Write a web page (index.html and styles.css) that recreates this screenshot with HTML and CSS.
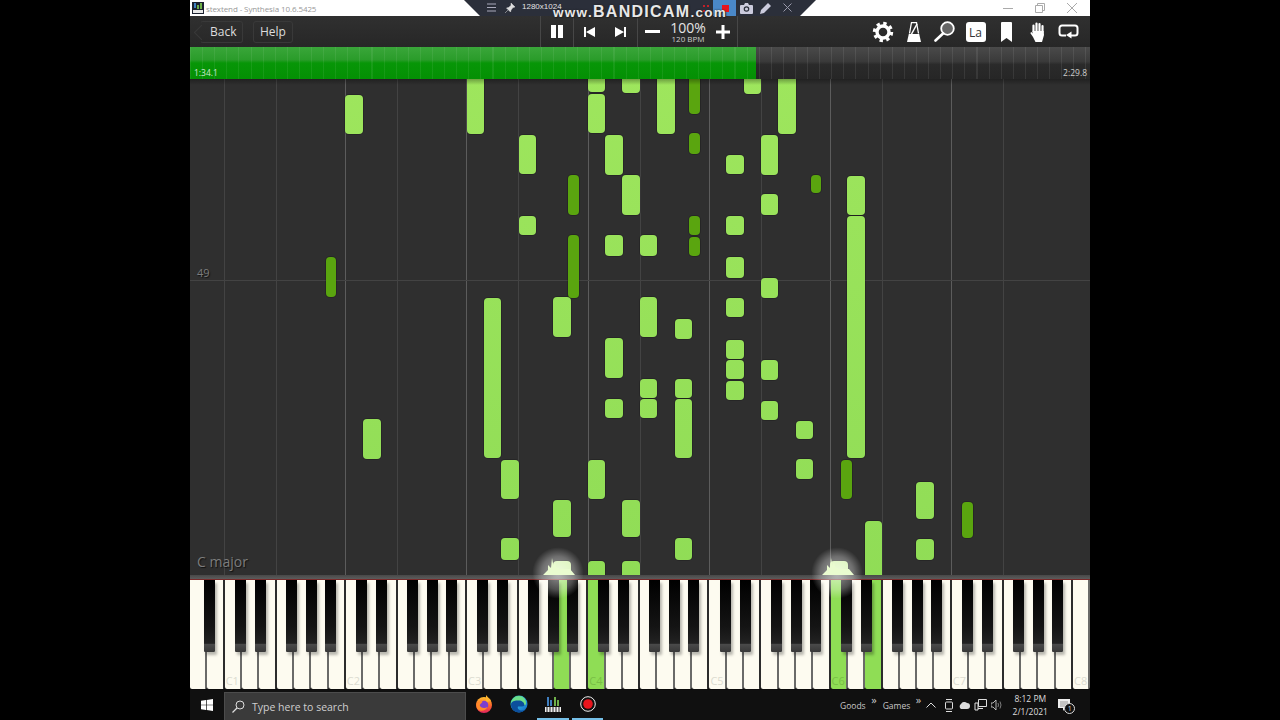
FILE: index.html
```html
<!DOCTYPE html>
<html lang="en">
<head>
    <meta charset="UTF-8">
    <title>stextend - Synthesia</title>
    <link rel="stylesheet" href="styles.css">
</head>
<body>
    <div class="screen">
        <div class="titlebar">
            <svg class="app-icon" width="12" height="12" viewBox="0 0 12 12">
                <rect width="12" height="12" fill="#1c2230"/>
                <rect x="2" y="1" width="2" height="5" fill="#3f7fc0"/>
                <rect x="5" y="3" width="2" height="4" fill="#6fb04a"/>
                <rect x="8" y="1" width="2" height="6" fill="#6fb04a"/>
                <rect x="1" y="8" width="10" height="3" fill="#e8e8e8"/>
            </svg>
            <span class="title-text">stextend - Synthesia 10.6.5425</span>
            <div class="window-buttons">
                <svg width="10" height="10" viewBox="0 0 10 10"><path d="M0 5.5h10" stroke="#aaa"/></svg>
                <svg width="10" height="10" viewBox="0 0 10 10"><path d="M.5 2.5h7v7h-7zM2.5 2.5v-2h7v7h-2" fill="none" stroke="#aaa"/></svg>
                <svg width="10" height="10" viewBox="0 0 10 10"><path d="M0 0l10 10M10 0L0 10" stroke="#aaa"/></svg>
            </div>
        </div>

        <div class="bandicam">
            <svg class="bc-icon" style="left:23px" width="10" height="9" viewBox="0 0 10 9"><path d="M0 1h9M0 4.5h9M0 8h9" stroke="#aab"/></svg>
            <svg class="bc-icon" style="left:41px" width="10" height="10" viewBox="0 0 10 10"><path d="M6 0l4 4-2 .5-2 2.5-.5 2L1.500 5l2-.5L6 2.500zM3 7L0 10" fill="#ddd" stroke="#ddd" stroke-width=".5"/></svg>
            <span class="bc-size">1280x1024</span>
            <div class="bc-rec"><span class="bc-square"></span></div>
            <span class="bc-dots"></span>
            <svg class="bc-icon" style="left:276px" width="13" height="11" viewBox="0 0 13 11"><path d="M1 2h3l1-2h3l1 2h3a1 1 0 0 1 1 1v7a1 1 0 0 1-1 1H1a1 1 0 0 1-1-1V3a1 1 0 0 1 1-1z" fill="#ccd"/><circle cx="6.500" cy="6" r="2.800" fill="#2b2f3a"/><circle cx="6.500" cy="6" r="1.600" fill="#ccd"/></svg>
            <svg class="bc-icon" style="left:296px" width="11" height="11" viewBox="0 0 11 11"><path d="M8 0l3 3-7 7-4 1 1-4z" fill="#ccd"/></svg>
            <svg class="bc-icon" style="left:319px" width="9" height="9" viewBox="0 0 9 9"><path d="M.5.5l8 8M8.500.5l-8 8" stroke="#99a"/></svg>
        </div>
        <span class="watermark"><small>www.</small>BANDICAM<small>.com</small></span>

        <div class="toolbar">
            <div class="nav-group">
                <a class="tool-btn back-btn">Back</a>
                <a class="tool-btn">Help</a>
            </div>
            <div class="tool-seg pause-seg">
                <svg width="12" height="13" viewBox="0 0 12 13"><path d="M0 0h5v13H0zM7 0h5v13H7z" fill="#fff"/></svg>
            </div>
            <div class="tool-seg skip-seg">
                <svg width="11" height="10" viewBox="0 0 11 10"><path d="M0 0h2v10H0zM11 0v10L2 5z" fill="#fff"/></svg>
                <svg width="11" height="10" viewBox="0 0 11 10"><path d="M11 0H9v10h2zM0 0v10l9-5z" fill="#fff"/></svg>
            </div>
            <div class="tool-seg speed-seg">
                <svg width="15" height="3" viewBox="0 0 15 3"><path d="M0 0h15v3H0z" fill="#fff"/></svg>
                <div class="speed">
                    <span class="speed-pct">100%</span>
                    <span class="speed-bpm">120 BPM</span>
                </div>
                <svg width="14" height="14" viewBox="0 0 14 14"><path d="M5.500 0h3v5.500H14v3H8.500V14h-3V8.500H0v-3h5.500z" fill="#fff"/></svg>
            </div>
            <div class="tool-icons">
                <svg width="22" height="22" viewBox="0 0 22 22">
                    <circle cx="11" cy="11" r="8.500" fill="none" stroke="#fff" stroke-width="3.400" stroke-dasharray="3.300 3.370"/>
                    <circle cx="11" cy="11" r="6" fill="none" stroke="#fff" stroke-width="3.400"/>
                </svg>
                <svg width="14" height="20" viewBox="0 0 14 20">
                    <path d="M0 20L1.800 12h10.400L14 20z" fill="#fff"/>
                    <path d="M2.500 11.500L4.500.5h5l2 11" fill="none" stroke="#fff" stroke-width="1.300"/>
                    <path d="M4 13L10 2" stroke="#fff" stroke-width="1.500"/>
                </svg>
                <svg width="21" height="21" viewBox="0 0 21 21">
                    <circle cx="13.500" cy="7.500" r="6.300" fill="#666" stroke="#fff" stroke-width="1.800"/>
                    <path d="M9 12.500L1.500 19.500" stroke="#fff" stroke-width="2.600" stroke-linecap="round"/>
                </svg>
                <span class="lang-btn">La</span>
                <svg width="11" height="20" viewBox="0 0 11 20"><path d="M1 0h9a1 1 0 0 1 1 1v19l-5.500-4L0 20V1a1 1 0 0 1 1-1z" fill="#fff"/></svg>
                <svg width="16" height="20" viewBox="0 0 16 20">
                    <path d="M3.500 10V3.500M6.500 9V1.500M9.500 9V2M12.500 10V4" stroke="#fff" stroke-width="2.200" stroke-linecap="round"/>
                    <path d="M2.500 9h11.200L14 13l-2 7H5.500L3 15 .3 11l1-1 1.700 1.500z" fill="#fff"/>
                </svg>
                <svg width="21" height="15" viewBox="0 0 21 15">
                    <path d="M8 11.500H4A2.500 2.500 0 0 1 1.500 9V4A2.500 2.500 0 0 1 4 1.500h13A2.500 2.500 0 0 1 19.500 4v5a2.500 2.500 0 0 1-2.500 2.500h-4" fill="none" stroke="#fff" stroke-width="2"/>
                    <path d="M13.500 7.500v7L8 11z" fill="#fff"/>
                </svg>
            </div>
        </div>

        <div class="progress">
            <div class="progress-done"></div>
            <span class="time time-now">1:34.1</span>
            <span class="time time-end">2:29.8</span>
        </div>

        <div class="stage" id="stage">
            <div class="roll" id="roll">
                <span class="measure">49</span>
                <span class="key-sig">C major</span>
            </div>
            <div class="divider"></div>
            <div class="keyboard" id="keyboard"></div>
        </div>

        <div class="taskbar">
            <svg class="start" width="12" height="12" viewBox="0 0 12 12"><path d="M0 1.700L5 1v4.700H0zM5.700.9L12 0v5.700H5.700zM0 6.300h5V11l-5-.7zM5.700 6.300H12V12l-6.300-.9z" fill="#fff"/></svg>
            <div class="search">
                <svg width="13" height="13" viewBox="0 0 13 13"><circle cx="8" cy="5" r="4" fill="none" stroke="#ddd"/><path d="M5 8l-4.500 4.500" stroke="#ddd" stroke-width="1.200"/></svg>
                <span>Type here to search</span>
            </div>
            <div class="task-apps">
                <div class="task-app">
                    <svg width="18" height="18" viewBox="0 0 18 18">
                        <defs><linearGradient id="fx" x1="0" y1="0" x2="0" y2="1"><stop offset="0" stop-color="#ffc02e"/><stop offset=".5" stop-color="#ff6a2a"/><stop offset="1" stop-color="#e0245e"/></linearGradient></defs>
                        <circle cx="9" cy="10" r="8" fill="url(#fx)"/>
                        <path d="M11 0c1 2 4 3 5 6l-5 1z" fill="#ffb52e"/>
                        <circle cx="9" cy="10" r="4.300" fill="#7b3fd0"/>
                        <path d="M1.500 8c2 1 3-2 5-3l1 2-3 3c1 3 5 4 8 2-1 3-6 5-9 3-2-1.500-2.500-4-2-7z" fill="#ff8a2a"/>
                    </svg>
                </div>
                <div class="task-app">
                    <svg width="18" height="18" viewBox="0 0 18 18">
                        <defs><linearGradient id="edge" x1="0" y1="0" x2="1" y2="1"><stop offset="0" stop-color="#3fd0a0"/><stop offset=".5" stop-color="#2aa8e0"/><stop offset="1" stop-color="#1060c0"/></linearGradient></defs>
                        <circle cx="9" cy="9" r="8.500" fill="url(#edge)"/>
                        <path d="M1 10C1 6 5 4 9 4c4 0 6 2.500 6 5 0 1.500-1 2.500-3 2.500H8c-1 2 1 4 4 4 1 0 2-.3 3-1-1.500 2-3.500 3-6 3C5 17.500 1 14.500 1 10z" fill="#0c4f9c"/>
                        <path d="M1 8C2 4 5 1 9 1c4 0 7 3 7 7 0 1-.5 2-1.500 2.500 0-3-2.500-5-6-5S2.500 6 1 8z" fill="#6ee08a"/>
                    </svg>
                </div>
                <div class="task-app running">
                    <svg width="16" height="16" viewBox="0 0 16 16">
                        <path d="M2 1h2v9H2zM5 4h2v6H5z" fill="#3f7fc0"/>
                        <path d="M9 1h2v9H9zM12 4h2v6h-2z" fill="#6fb04a"/>
                        <rect y="11" width="16" height="5" fill="#eee"/>
                        <path d="M2 11v5M5 11v5M8 11v5M11 11v5M14 11v5" stroke="#222"/>
                    </svg>
                </div>
                <div class="task-app running">
                    <svg width="16" height="16" viewBox="0 0 16 16"><circle cx="8" cy="8" r="7.300" fill="#111" stroke="#eee"/><circle cx="8" cy="8" r="4.800" fill="#e8141c"/></svg>
                </div>
            </div>
            <div class="tray">
                <span class="tray-link">Goods<b>»</b></span>
                <span class="tray-link games">Games<b>»</b></span>
                <svg class="tray-up" width="10" height="6" viewBox="0 0 10 6"><path d="M.5 5.500L5 1l4.500 4.500" fill="none" stroke="#ddd"/></svg>
                <svg width="10" height="13" viewBox="0 0 10 13"><rect x="1.500" y="3" width="7" height="7" rx="1" fill="none" stroke="#ddd"/><path d="M2 .5h6M2 12.500h6" stroke="#ddd"/></svg>
                <svg width="12" height="8" viewBox="0 0 12 8"><path d="M3 8a3 3 0 0 1 0-5 4 4 0 0 1 6-1 3 3 0 0 1 0 6z" fill="#ddd"/></svg>
                <svg width="13" height="12" viewBox="0 0 13 12"><path d="M4.500.5h8v7h-8zM1 4h3v7H1zM4 9.500h5" fill="none" stroke="#ddd"/></svg>
                <svg width="11" height="10" viewBox="0 0 11 10"><path d="M0 3h2l3-3v10L2 7H0z" fill="none" stroke="#ddd" stroke-width=".8"/><path d="M7 3q1 2 0 4M9 1.500q2 3.500 0 7" fill="none" stroke="#999" stroke-width=".8"/></svg>
                <div class="clock"><span>8:12 PM</span><span>2/1/2021</span></div>
                <div class="notify">
                    <svg width="12" height="12" viewBox="0 0 12 12"><path d="M0 0h12v9H7l-2 3V9H0z" fill="#eee"/><path d="M2 3h8M2 5h8M2 7h5" stroke="#777" stroke-width=".7"/></svg>
                    <span class="badge">1</span>
                </div>
            </div>
        </div>
    </div>
    <script src="script.js"></script>
</body>
</html>
```

FILE: styles.css
```css
* {
    margin: 0;
    padding: 0;
    box-sizing: border-box;
}

body {
    background: #000;
    height: 720px;
    overflow: hidden;
    display: flex;
    justify-content: center;
    font-family: 'Open Sans', 'Liberation Sans', sans-serif;
}

.screen {
    position: relative;
    width: 900px;
    height: 720px;
    display: flex;
    flex-direction: column;
}

/* window title */
.titlebar {
    height: 16px;
    background: #fff;
    display: flex;
    align-items: center;
    padding-left: 2px;
}

.app-icon {
    margin-right: 2px;
}

.title-text {
    font-size: 8px;
    letter-spacing: -.1px;
    color: #999;
}

.window-buttons {
    margin-left: auto;
    display: flex;
    gap: 22px;
    padding-right: 13px;
}

/* capture bar sits over the title bar */
.bandicam {
    position: absolute;
    left: 274px;
    top: 0;
    width: 352px;
    height: 16px;
    background: #2b2f3a;
    clip-path: polygon(0 0, 100% 0, 336px 100%, 16px 100%);
}

.bc-icon {
    position: absolute;
    top: 3px;
}

.bc-size {
    position: absolute;
    left: 58px;
    top: 2px;
    font-size: 8px;
    color: #e4e4e4;
    font-family: 'Liberation Sans', sans-serif;
}

.bc-rec {
    position: absolute;
    left: 249px;
    top: 0;
    width: 23px;
    height: 16px;
    background: #4a88c8;
}

.bc-square {
    position: absolute;
    left: 9px;
    top: 5px;
    width: 7px;
    height: 7px;
    background: #e8141c;
}

.bc-dots {
    position: absolute;
    left: 239px;
    top: 5px;
    width: 6px;
    height: 7px;
    border-left: 2px dotted #c02028;
    border-right: 2px dotted #c02028;
}

.watermark {
    position: absolute;
    left: 363px;
    top: 3px;
    font-family: 'Liberation Sans', sans-serif;
    font-weight: bold;
    font-size: 16px;
    line-height: 17px;
    letter-spacing: 1.300px;
    color: #e8e8e8;
    white-space: nowrap;
    text-shadow: 0 0 2px #222, 1px 1px 1px #222;
}

.watermark small {
    font-size: 13.500px;
}

/* playback toolbar */
.toolbar {
    height: 31px;
    background: linear-gradient(#303030, #272727);
    display: flex;
    color: #ddd;
}

.nav-group {
    width: 350px;
    display: flex;
    align-items: center;
    gap: 10px;
    padding-left: 10px;
}

.tool-btn {
    height: 22px;
    padding: 0 6px;
    border: 1px solid #393939;
    border-radius: 3px;
    font-size: 12px;
    line-height: 20px;
    color: #ddd;
}

.back-btn {
    position: relative;
    width: 43px;
    padding-left: 9px;
    border-left-color: transparent;
}

.back-btn::before {
    content: "";
    position: absolute;
    left: -5px;
    top: 5px;
    width: 10px;
    height: 10px;
    border-left: 1px solid #393939;
    border-bottom: 1px solid #393939;
    transform: rotate(45deg);
}

.tool-seg {
    display: flex;
    align-items: center;
    justify-content: center;
    border-left: 1px solid #474747;
}

.pause-seg {
    width: 33px;
}

.skip-seg {
    width: 64px;
    gap: 20px;
    padding-right: 1px;
}

.speed-seg {
    width: 101px;
    gap: 10px;
    border-right: 1px solid #474747;
}

.speed {
    display: flex;
    flex-direction: column;
    align-items: center;
}

.speed-pct {
    font-size: 14px;
    line-height: 13px;
    color: #e4e4e4;
}

.speed-bpm {
    font-size: 8px;
    line-height: 9px;
    color: #ccc;
}

.tool-icons {
    flex: 1;
    display: grid;
    grid-template-columns: repeat(7, 31px);
    justify-content: end;
    justify-items: center;
    align-items: center;
    padding-right: 6px;
}

.lang-btn {
    width: 20px;
    height: 20px;
    background: #fff;
    border-radius: 3px;
    color: #333;
    font-size: 12px;
    line-height: 22px;
    text-align: center;
}

/* progress strip */
.progress {
    position: relative;
    height: 32px;
    background:
        repeating-linear-gradient(90deg, rgba(255,255,255,.08) 0 1px, transparent 1px 12.1px),
        linear-gradient(#4a4a4a, #3a3a3a 45%, #2a2a2a 55%, #262626);
}

.progress-done {
    width: 566px;
    height: 100%;
    background:
        repeating-linear-gradient(90deg, rgba(255,255,255,.07) 0 1px, transparent 1px 12.1px),
        linear-gradient(#3aa63a, #2a9c2a 40%, #079607 50%, #049004);
}

.time {
    position: absolute;
    bottom: 1px;
    font-size: 8.500px;
    color: #ccc;
}

.time-now {
    left: 4px;
    color: #cfe8cf;
}

.time-end {
    right: 3px;
}

/* falling notes */
.stage {
    position: relative;
    flex: 1;
    display: flex;
    flex-direction: column;
}

.roll {
    position: relative;
    flex: 1;
    overflow: hidden;
    background: #2f2f2f;
}

.roll::before {
    content: "";
    position: absolute;
    left: 0;
    right: 0;
    top: 0;
    height: 6px;
    background: linear-gradient(rgba(0,0,0,.3), transparent);
    z-index: 2;
}

.grid-line {
    position: absolute;
    top: 0;
    bottom: 0;
    width: 1px;
    background: #434343;
}

.grid-line.octave {
    background: #5c5c5c;
}

.grid-row {
    position: absolute;
    left: 0;
    right: 0;
    top: 201px;
    height: 1px;
    background: #434343;
}

.note {
    position: absolute;
    background: linear-gradient(#a0e75e, #8cda54) fixed;
    border-radius: 4px;
    box-shadow: 0 0 0 1px rgba(0,0,0,.18);
}

.note.sharp {
    background: #5aa50f;
}

.note.lit {
    background: #d2f3a8;
}

.measure {
    position: absolute;
    left: 7px;
    top: 186px;
    font-size: 11px;
    color: #7c7c7c;
    text-shadow: 1px 1px 1px #111;
    z-index: 1;
}

.key-sig {
    position: absolute;
    left: 7px;
    top: 473px;
    font-size: 14px;
    color: #7c7c7c;
    text-shadow: 1px 1px 1px #111;
    z-index: 1;
}

.divider {
    height: 5px;
    background: linear-gradient(#484848, #5c5c5c);
    border-bottom: 1px solid #7a2a2a;
}

.keyboard {
    position: relative;
    height: 110px;
    background: #0c0c0c;
    display: flex;
}

.white-key {
    flex: 1;
    height: 109px;
    background: #fdfbf0;
    border-right: 2px solid #6a6a68;
    border-radius: 0 0 2px 2px;
    display: flex;
    align-items: flex-end;
    justify-content: center;
    font-size: 11px;
    line-height: 16px;
    color: #dcdcd0;
}

.white-key.edge {
    border-right-color: #2c2c2c;
}

.white-key.down {
    background: #8fdd55;
    color: #79bf46;
}

.black-key {
    position: absolute;
    top: 0;
    width: 11px;
    height: 72px;
    background: linear-gradient(#000, #141414 65%, #222 88%, #4a4a4a 89%, #383838);
    border-radius: 0 0 1px 1px;
    box-shadow: 2px 3px 3px rgba(0,0,0,.28);
}

.glow {
    position: absolute;
    width: 52px;
    height: 52px;
    border-radius: 50%;
    background: radial-gradient(circle, rgba(255,255,255,.6), rgba(255,255,255,.3) 45%, transparent 70%);
    z-index: 3;
}

.spark {
    position: absolute;
    z-index: 4;
}

/* windows taskbar */
.taskbar {
    height: 30px;
    background: #101010;
    display: flex;
    align-items: center;
    color: #ddd;
}

.start {
    margin: 0 11px;
}

.search {
    width: 242px;
    height: 28px;
    margin-top: 2px;
    background: #3a3a3a;
    border: 1px solid #4c4c4c;
    border-bottom: none;
    display: flex;
    align-items: center;
    gap: 7px;
    padding-left: 7px;
    font-size: 10.500px;
    color: #cfcfcf;
}

.task-apps {
    display: flex;
    margin-left: 1px;
}

.task-app {
    width: 34.500px;
    height: 30px;
    display: flex;
    align-items: center;
    justify-content: center;
    border-bottom: 2px solid transparent;
}

.task-app.running {
    border-image: linear-gradient(90deg, transparent 2px, #76c0e8 2px, #76c0e8 calc(100% - 3px), transparent calc(100% - 3px)) 1;
}

.tray {
    flex: 1;
    display: flex;
    align-items: center;
    gap: 4px;
    padding-left: 235px;
    font-size: 8.500px;
}

.tray-link {
    position: relative;
    margin-right: 13px;
    color: #c8c8c8;
    white-space: nowrap;
}

.tray-link.games {
    margin-right: 12px;
}

.tray-link b {
    position: absolute;
    right: -11px;
    top: -8px;
    font-size: 11px;
    font-weight: normal;
}

.tray-up {
    margin-right: 4px;
}

.clock {
    width: 42px;
    margin-left: 3px;
    display: flex;
    flex-direction: column;
    align-items: center;
    line-height: 13px;
    white-space: nowrap;
}

.notify {
    position: relative;
    margin-left: 3px;
    display: flex;
}

.badge {
    position: absolute;
    left: 6px;
    top: 4px;
    width: 11px;
    height: 11px;
    border-radius: 50%;
    background: #111;
    border: 1px solid #ddd;
    font-size: 7px;
    line-height: 9px;
    text-align: center;
}
```

FILE: script.js
```js
const SCREEN_LEFT = 190;
const ROLL_TOP = 79;
const ROLL_BOTTOM = 575;
const WHITE_W = 900 / 52;
const OCTAVE_W = WHITE_W * 7;
const C1 = WHITE_W * 2;

// [left, right, top, bottom] in screen pixels, read off the picture
const notes = [
    [345, 363, 95, 134], [467, 484, 70, 134], [484, 501, 298, 458], [501, 519, 460, 499], [501, 519, 538, 560],
    [363, 381, 419, 459], [519, 536, 135, 174], [519, 536, 216, 235], [553, 571, 297, 337], [553, 571, 500, 537],
    [588, 605, 70, 92], [588, 605, 94, 133], [588, 605, 460, 499], [588, 605, 561, 580],
    [605, 623, 135, 175], [605, 623, 235, 256], [605, 623, 338, 378], [605, 623, 399, 418],
    [622, 640, 70, 93], [622, 640, 175, 215], [622, 640, 500, 537], [622, 640, 561, 580],
    [640, 657, 235, 256], [640, 657, 297, 337], [640, 657, 379, 398], [640, 657, 399, 418],
    [657, 675, 70, 134], [675, 692, 319, 339], [675, 692, 379, 398], [675, 692, 399, 458], [675, 692, 538, 560],
    [726, 744, 155, 174], [726, 744, 216, 235], [726, 744, 257, 278], [726, 744, 298, 317],
    [726, 744, 340, 359], [726, 744, 360, 379], [726, 744, 381, 400], [744, 761, 70, 94],
    [761, 778, 135, 175], [761, 778, 194, 215], [761, 778, 278, 298], [761, 778, 360, 380], [761, 778, 401, 420],
    [778, 796, 70, 134], [796, 813, 421, 439], [796, 813, 459, 479],
    [847, 865, 176, 215], [847, 865, 216, 458], [865, 882, 521, 580],
    [916, 934, 482, 519], [916, 934, 539, 560]
];

const sharps = [
    [326, 336, 257, 297], [568, 579, 175, 215], [568, 579, 235, 298],
    [689, 700, 70, 114], [689, 700, 133, 154], [689, 700, 216, 235], [689, 700, 237, 256],
    [811, 821, 175, 193], [841, 852, 460, 499], [962, 973, 502, 538]
];

const litNotes = [[553, 571, 561, 580], [830, 848, 561, 580]];
const pressed = { 'A3': true, 'C4': true, 'C6': true, 'E6': true };

const roll = document.getElementById('roll');
const stage = document.getElementById('stage');
const keyboard = document.getElementById('keyboard');

function addEl(parent, className, style) {
    const el = document.createElement('div');
    el.className = className;
    Object.assign(el.style, style);
    parent.appendChild(el);
    return el;
}

// grid: a bright line on every C, a dim one on every F
for (let i = 0; i < 7; i++) {
    const c = C1 + OCTAVE_W * i;
    addEl(roll, i === 0 ? 'grid-line' : 'grid-line octave', { left: Math.floor(c) + 'px' });
    addEl(roll, 'grid-line', { left: Math.floor(c + WHITE_W * 3) + 'px' });
}
addEl(roll, 'grid-row', {});

function addNote(n, className) {
    addEl(roll, className, {
        left: n[0] - SCREEN_LEFT + 'px',
        width: n[1] - n[0] + 'px',
        top: n[2] - ROLL_TOP + 'px',
        height: n[3] - n[2] + 'px'
    });
}
notes.forEach(n => addNote(n, 'note'));
sharps.forEach(n => addNote(n, 'note sharp'));
litNotes.forEach(n => addNote(n, 'note lit'));

// keyboard: A0 to C8
const names = 'CDEFGAB';
for (let i = 0; i < 52; i++) {
    const step = (i + 5) % 7;
    const octave = Math.floor((i + 5) / 7);
    const name = names[step] + octave;
    const key = addEl(keyboard, 'white-key', {});
    if (step === 2 || step === 6) key.classList.add('edge');
    if (pressed[name]) key.classList.add('down');
    if (step === 0) key.textContent = name;
}

function addBlack(x) {
    addEl(keyboard, 'black-key', { left: x + 'px' });
}
addBlack(14);
[10.4, 30.4, 61.4, 81.4, 100.4].forEach(off => {
    for (let i = 0; i < 7; i++) addBlack(Math.round(C1 + OCTAVE_W * i + off));
});

// glow where a note hits the keys
const SVG_NS = 'http://www.w3.org/2000/svg';
[558, 837].forEach(cx => {
    const x = cx - SCREEN_LEFT;
    addEl(stage, 'glow', { left: x - 26 + 'px', top: ROLL_BOTTOM - ROLL_TOP - 28 + 'px' });
    const svg = document.createElementNS(SVG_NS, 'svg');
    svg.setAttribute('class', 'spark');
    svg.setAttribute('width', '32');
    svg.setAttribute('height', '17');
    svg.style.left = x - 15 + 'px';
    svg.style.top = ROLL_BOTTOM - ROLL_TOP - 17 + 'px';
    const p = document.createElementNS(SVG_NS, 'polygon');
    p.setAttribute('points', '0,17 5,12 5,7 8,10 9,0 10.500,8 12,4 13,9 17,11 27,11 32,17');
    p.setAttribute('fill', '#eafcd0');
    svg.appendChild(p);
    stage.appendChild(svg);
});
```
